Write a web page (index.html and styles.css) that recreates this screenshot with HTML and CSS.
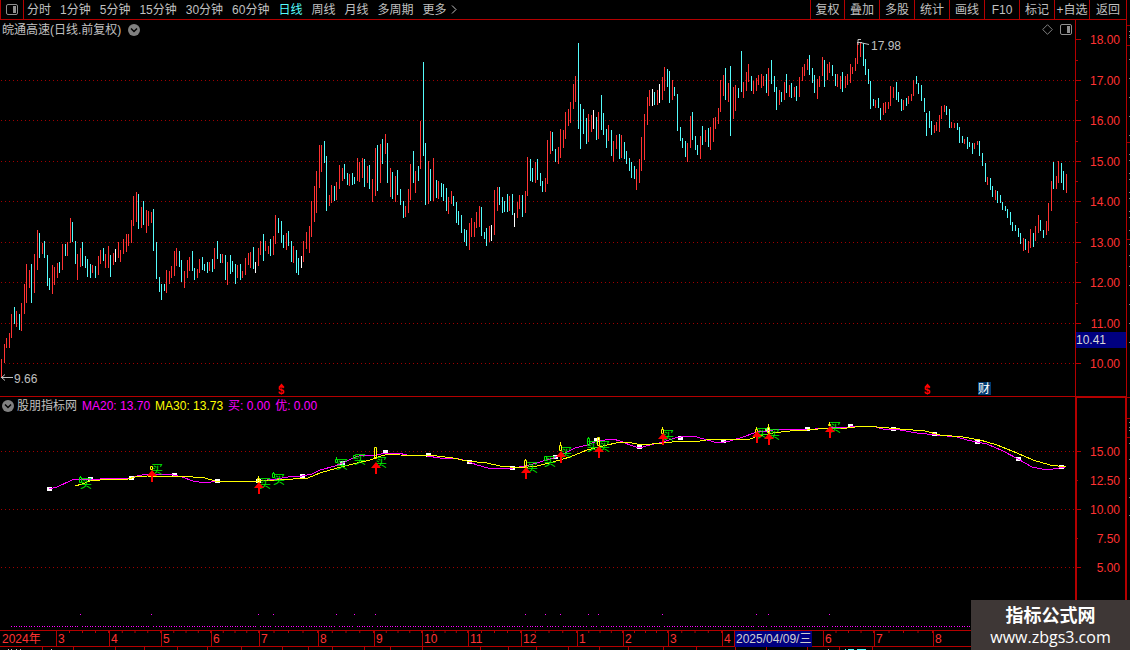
FILE: index.html
```
<!DOCTYPE html>
<html lang="zh-CN">

<head>
  <meta charset="UTF-8" />
  <meta name="viewport" content="width=device-width, initial-scale=1.0" />
  <title>皖通高速 日线</title>
  <link rel="stylesheet" href="styles.css">
</head>

<body>

  <header class="toolbar">
    <button class="layout-btn" aria-label="布局">
      <svg width="12" height="11" viewBox="0 0 12 11">
        <rect x="0.5" y="0.5" width="11" height="10" rx="1.5" fill="none" stroke="#909090" />
        <rect x="7" y="2" width="3" height="7" fill="#909090" />
      </svg>
    </button>
    <nav class="periods">
      <button>分时</button>
      <button>1分钟</button>
      <button>5分钟</button>
      <button>15分钟</button>
      <button>30分钟</button>
      <button>60分钟</button>
      <button class="active">日线</button>
      <button>周线</button>
      <button>月线</button>
      <button>多周期</button>
      <button>更多 <svg width="6" height="9" viewBox="0 0 6 9"><path d="M1 0.5L5 4.5L1 8.5" fill="none" stroke="#c0c0c0" /></svg></button>
    </nav>
    <div class="tools">
      <button>复权</button>
      <button>叠加</button>
      <button>多股</button>
      <button>统计</button>
      <button>画线</button>
      <button>F10</button>
      <button>标记</button>
      <button>+自选</button>
      <button>返回</button>
    </div>
  </header>

  <!-- K线 -->
  <section class="panel price">
    <div class="plot">
      <svg class="chart" id="kline" viewBox="0 20 1075 376" preserveAspectRatio="none">
        <path class="grid" d="M1 80.5H1075M1 120.5H1075M1 161.5H1075M1 201.5H1075M1 242.5H1075M1 282.5H1075M1 323.5H1075M1 363.5H1075" />
        <g id="bars" shape-rendering="crispEdges"></g>
        <path class="pointer" d="M858 45V39.5H861M857 42.5H862M860 42.5L869 44.5" />
        <text class="mark" x="871" y="50">17.98</text>
        <path class="pointer" d="M1 377.5H13M5 374.5L1.5 377.5L5 380.5" />
        <text class="mark" x="14" y="383">9.66</text>
        <path d="M281.5 383.5L284.5 387H278.5ZM927.5 383.5L930.5 387H924.5Z" fill="#f00" />
        <text class="dollar" x="278" y="394">$</text>
        <text class="dollar" x="924" y="394">$</text>
        <rect x="978" y="382" width="13" height="13" fill="#003a70" />
        <text class="report" x="978" y="393">财</text>
      </svg>
      <div class="title">
        <span>皖通高速(日线.前复权)</span>
        <button class="drop" aria-label="切换"><svg width="12" height="12" viewBox="0 0 12 12"><circle cx="6" cy="6" r="6" fill="#808080" /><path d="M3 4.5L6 7.5L9 4.5" fill="none" stroke="#000" stroke-width="1.5" /></svg></button>
        <div class="corner">
          <svg width="11" height="11" viewBox="0 0 11 11"><path d="M5.5 0.7L10.3 5.5L5.5 10.3L0.7 5.5Z" fill="none" stroke="#808080" /></svg>
          <svg width="12" height="11" viewBox="0 0 12 11">
            <rect x="0.5" y="0.5" width="11" height="10" rx="1.5" fill="none" stroke="#909090" />
            <rect x="7" y="2" width="3" height="7" fill="#909090" />
          </svg>
        </div>
      </div>
    </div>
    <div class="axis">
      <svg class="ticks" viewBox="1076 20 50 376" preserveAspectRatio="none">
        <path d="M1076 39.5h5M1076 80.5h5M1076 120.5h5M1076 161.5h5M1076 201.5h5M1076 242.5h5M1076 282.5h5M1076 323.5h5M1076 363.5h5M1076 60.5h2M1076 100.5h2M1076 141.5h2M1076 181.5h2M1076 222.5h2M1076 262.5h2M1076 303.5h2" />
      </svg>
      <ul>
        <li>18.00</li>
        <li>17.00</li>
        <li>16.00</li>
        <li>15.00</li>
        <li>14.00</li>
        <li>13.00</li>
        <li>12.00</li>
        <li>11.00</li>
        <li>10.00</li>
      </ul>
      <span class="cursor-price">10.41</span>
    </div>
    <svg class="side" viewBox="1126 20 4 377" preserveAspectRatio="none">
      <path d="M1126 25.5h4M1126 45.5h4M1126 142.5h4M1126 239.5h4" stroke="#b40000" />
      <path id="sideMarks" stroke="#c0c0c0" />
    </svg>
  </section>

  <!-- 指标 -->
  <section class="panel indicator">
    <div class="plot">
      <svg class="chart" viewBox="0 397 1075 233" preserveAspectRatio="none">
        <path class="grid" d="M1 451.5H1075M1 509.5H1075M1 567.5H1075" />
        <g id="dots" fill="#f0f" shape-rendering="crispEdges"></g>
        <g id="squares" fill="#fff" shape-rendering="crispEdges"></g>
        <polyline class="ma20" points="49,489 57,487 72,480 80,479 100,479 110,478 125,479 132,478 137,476 147,474 163,474 173,475 182,477 193,481 205,483 217,481 228,481 235,482 257,481 267,480 277,479 288,477 302,476 312,474 320,470 335,466 345,462 355,457 363,455 373,456 385,453 398,453 407,455 427,456 440,458 455,458 467,461 477,465 488,468 513,468 525,466 537,463 553,458 563,454 575,448 587,445 597,441 613,439 620,441 630,445 639,448 650,445 663,442 675,438 687,436 697,437 707,440 718,443 730,441 743,437 757,432 767,431 780,429 800,430 830,428 850,427 863,426 872,426 883,429 900,430 917,433 937,435 957,437 967,440 987,444 1003,451 1018,459 1032,467 1047,470 1065,467" />
        <polyline class="ma30" points="75,486 82,484 90,481 100,480 128,479 135,477 147,476 193,477 205,478 215,481 257,481 277,480 293,479 308,478 320,473 337,468 353,464 370,460 378,457 388,454 400,455 437,456 453,458 467,461 487,463 500,466 520,468 537,466 553,462 570,457 587,450 603,446 620,442 632,443 642,445 663,443 672,442 700,441 713,439 750,439 758,436 773,433 790,431 807,430 830,428 847,428 863,426 877,427 900,429 925,431 940,435 963,437 980,440 997,445 1017,453 1033,460 1050,465 1066,467" />
        <g id="signals"></g>
      </svg>
      <div class="title">
        <button class="drop" aria-label="切换指标"><svg width="12" height="12" viewBox="0 0 12 12"><circle cx="6" cy="6" r="6" fill="#808080" /><path d="M3 4.5L6 7.5L9 4.5" fill="none" stroke="#000" stroke-width="1.5" /></svg></button>
        <span>股朋指标网</span>
        <span class="magenta">MA20: 13.70</span>
        <span class="yellow">MA30: 13.73</span>
        <span class="magenta">买: 0.00</span>
        <span class="magenta">优: 0.00</span>
      </div>
    </div>
    <div class="axis">
      <svg class="ticks" viewBox="1077 398 48 232" preserveAspectRatio="none">
        <path d="M1077 451.5h4M1077 509.5h4M1077 567.5h4M1077 480.5h1M1077 538.5h1" />
      </svg>
      <ul>
        <li>15.00</li>
        <li>12.50</li>
        <li>10.00</li>
        <li>7.50</li>
        <li>5.00</li>
      </ul>
    </div>
    <svg class="side" viewBox="1126 397 4 233" preserveAspectRatio="none">
      <path d="M1126 397.5h4M1126 418.5h4M1126 437.5h4" stroke="#b40000" />
      <path d="M1129 422.5h1M1129 427.5h1M1129 430.5h1M1129 443.5h1M1129 459.5h1M1129 478.5h1M1129 497.5h1M1129 515.5h1" stroke="#c0c0c0" />
    </svg>
  </section>

  <ol class="timeline">
    <li>2024年</li>
    <li>3</li>
    <li>4</li>
    <li>5</li>
    <li>6</li>
    <li>7</li>
    <li>8</li>
    <li>9</li>
    <li>10</li>
    <li>11</li>
    <li>12</li>
    <li>1</li>
    <li>2</li>
    <li>3</li>
    <li>4</li>
    <li class="current">2025/04/09/三</li>
    <li>6</li>
    <li>7</li>
    <li>8</li>
  </ol>
  <svg class="footer-strip" viewBox="0 647 1130 3" preserveAspectRatio="none">
    <path d="M42.5 647v3M73.5 647v3M115.5 647v3M144.5 647v3M177.5 647v3M207.5 647v3M241.5 647v3M282.5 647v3M308.5 647v3M332.5 647v3M364.5 647v3M390.5 647v3M422.5 647v3M480.5 647v3M508.5 647v3M536.5 647v3M568.5 647v3M599.5 647v3M628.5 647v3M663.5 647v3M696.5 647v3M735.5 647v3M766.5 647v3M807.5 647v3M839.5 647v3M872.5 647v3" stroke="#b40000" />
    <path d="M8 649.5h1M11 649.5h1M16 649.5h1M20 649.5h1M51 649.5h1M828 649.5h1" stroke="#c0c0c0" />
    <path d="M845 649.5h1M848 649.5h6M857 649.5h9" stroke="#54fcfc" />
  </svg>

  <aside class="watermark">
    <strong>指标公式网</strong>
    <span>www.zbgs3.com</span>
  </aside>

  <script src="script.js"></script>
</body>

</html>
```

FILE: styles.css
```
* {
  box-sizing: border-box;
}

body {
  margin: 0;
  height: 100vh;
  display: flex;
  flex-direction: column;
  overflow: hidden;
  background: #000;
  color: #c0c0c0;
  font-family: "Liberation Sans", "Noto Sans CJK SC", sans-serif;
  font-size: 12px;
  line-height: 14px;
}

button {
  margin: 0;
  padding: 0;
  border: none;
  background: none;
  color: inherit;
  font: inherit;
  white-space: nowrap;
  cursor: pointer;
}

ul,
ol {
  margin: 0;
  padding: 0;
  list-style: none;
}

svg {
  display: block;
}

/* 顶部工具栏 */
.toolbar {
  display: flex;
  height: 20px;
  margin-right: 3px;
  border: solid #b40000;
  border-width: 0 1px 1px 0;
}

.layout-btn {
  display: flex;
  align-items: center;
  justify-content: center;
  width: 24px;
  border: solid #b40000;
  border-width: 0 1px;
}

.periods {
  display: flex;
  gap: 9px;
  padding-left: 3px;
}

.periods svg {
  display: inline-block;
  margin-left: 1px;
}

.periods .active {
  color: #54fcfc;
}

.tools {
  display: flex;
  margin-left: auto;
}

.tools button {
  width: 35px;
  border-left: 1px solid #b40000;
}

.tools button:first-child {
  width: 34px;
}

.tools button:last-child {
  width: 37px;
}

/* 图表区 */
.panel {
  display: grid;
  grid-template-columns: minmax(0, 1fr) 51px 4px;
  grid-template-rows: minmax(0, 1fr);
  min-height: 0;
}

.price {
  flex: 377 1 0;
}

.indicator {
  flex: 233 1 0;
}

.plot,
.axis {
  display: grid;
  grid-template-columns: minmax(0, 1fr);
  grid-template-rows: minmax(0, 1fr);
  min-height: 0;
}

.plot > *,
.axis > * {
  grid-area: 1 / 1;
}

.price .plot,
.price .axis {
  border-bottom: 1px solid #b40000;
}

.chart,
.ticks,
.side {
  width: 100%;
  height: 100%;
}

.chart {
  overflow: visible;
}

.grid {
  fill: none;
  stroke: #a00000;
  stroke-dasharray: 1 3;
}

.title {
  display: flex;
  align-self: start;
  align-items: center;
  gap: 7px;
  height: 19px;
  padding: 0 3px 0 2px;
}

.corner {
  display: flex;
  gap: 7px;
  margin-left: auto;
}

.indicator .title {
  height: 17px;
  gap: 5px;
}

.indicator .drop {
  margin-right: -2px;
}

.magenta {
  color: #f0f;
}

.yellow {
  color: #ff0;
}

.axis {
  position: relative;
  border-left: 1px solid #b40000;
  color: #ff3232;
}

.axis ul {
  display: flex;
  flex-direction: column;
  justify-content: space-between;
  padding: 13px 6px 25px;
  text-align: right;
}

.indicator .axis {
  border-width: 1px 1px 0 2px;
  border-style: solid;
  border-color: #b40000;
}

.indicator .axis ul {
  padding: 47px 5px 55px;
}

.ticks {
  stroke: #b40000;
}

.cursor-price {
  position: absolute;
  top: 83%;
  left: 0;
  right: 0;
  height: 16px;
  line-height: 16px;
  background: #000080;
  color: #d8d8d8;
}

.side {
  border-left: 1px solid #b40000;
}

.mark {
  fill: #c0c0c0;
}

.pointer {
  fill: none;
  stroke: #c0c0c0;
}

.dollar {
  fill: #f00;
  font-weight: bold;
  font-size: 11px;
}

.report {
  fill: #fff;
}

.ma20,
.ma30 {
  fill: none;
  stroke: #f0f;
  shape-rendering: crispEdges;
}

.ma30 {
  stroke: #ff0;
}

.buy {
  fill: #00f000;
}

/* 时间轴 */
.timeline {
  display: grid;
  grid-template-columns: 56fr 53fr 52fr 50fr 48fr 59fr 56fr 48fr 46fr 53fr 56fr 46fr 45fr 54fr 12fr 89fr 51fr 59fr 197fr;
  height: 17px;
  border: solid #b40000;
  border-width: 1px 0;
  color: #ff3232;
}

.timeline li {
  min-width: 0;
  padding-left: 1px;
  line-height: 16px;
  white-space: nowrap;
  border-left: 1px solid #b40000;
  background: linear-gradient(to left, #b40000 1px, transparent 1px) 0 0 / 25% 2px repeat-x;
}

.timeline li:first-child,
.timeline li:nth-child(15) {
  background: none;
}

.timeline li:first-child {
  border-left-color: transparent;
}

.timeline .current {
  margin-right: 11px;
  color: #d0d0d0;
  background: #000080;
}

.footer-strip {
  width: 100%;
  height: 3px;
}

.watermark {
  position: absolute;
  right: 0;
  bottom: 0;
  display: flex;
  flex-direction: column;
  align-items: center;
  width: 159px;
  height: 50px;
  padding-top: 2px;
  background: #3e3736;
  color: #fff;
}

.watermark strong {
  font-family: "Noto Sans CJK SC", sans-serif;
  font-size: 18px;
  line-height: 24px;
}

.watermark span {
  font-family: "Open Sans", sans-serif;
  font-size: 16px;
  line-height: 22px;
}
```

FILE: script.js
```
// r = 涨, c = 跌, w = 平; 每项: x,最高,最低
const bars = `
r1,359,377 r4,344,363 r6,338,348 r9,333,348 r11,314,338 c14,307,324 r16,311,327 c19,314,330 r21,303,331 r24,284,314
r26,264,303 r29,270,288 c31,264,303 r34,254,293 r37,230,270 c39,233,258 r42,243,254 c44,241,258 c47,255,286 c49,278,290
r52,265,294 r54,267,285 r57,263,278 c59,262,273 r62,244,270 c65,244,256 r67,242,256 r70,218,243 c72,222,242 c75,241,264
r77,254,280 r80,248,267 c82,242,266 c85,256,268 c87,259,277 c90,264,278 r92,265,273 c95,266,278 r98,256,275 r100,250,264
c103,248,261 r105,254,268 r108,246,268 c110,255,277 r113,253,265 w115,249,262 r118,242,258 r120,250,262 r123,239,254 r126,234,252
r128,234,246 r131,220,243 r133,196,226 r136,192,222 c138,194,229 r141,207,228 c143,201,225 r146,210,233 r148,211,226 r151,212,223
c153,209,251 c156,242,279 c159,277,292 c161,284,300 c164,284,291 r166,270,293 r169,271,284 r171,266,278 r174,251,276 r176,248,266
c179,251,267 c181,260,282 r184,271,288 r187,260,278 r189,257,271 c192,251,271 c194,268,280 r197,269,278 r199,259,273 c202,257,270
c204,264,271 c207,262,273 r209,262,271 c212,259,272 r214,248,269 c217,241,259 c220,254,263 r222,254,263 c225,255,280 r227,262,285
c230,255,274 c232,261,272 c235,264,284 r237,265,278 c240,264,280 r242,271,278 r245,258,275 r248,253,265 r250,252,268 c253,247,269
w255,262,273 r258,248,266 r260,241,255 c263,234,261 r265,241,251 r268,246,254 c270,239,256 r273,236,255 r275,215,244 c278,218,233
c281,221,243 c283,235,248 r286,233,250 c288,231,246 c291,241,262 r293,246,263 c296,250,273 c298,258,275 w301,256,268 r303,241,262
r306,232,249 r309,226,253 r311,201,237 r314,186,222 r316,171,213 r319,145,188 r321,145,172 c324,141,163 c326,156,211 r329,195,206
r331,185,203 c334,186,201 r336,182,200 r339,165,189 r342,168,181 c344,164,179 c347,173,185 r349,174,186 c352,173,185 c354,177,184
r357,158,181 r359,162,182 r362,158,178 c364,159,187 r367,166,183 c369,165,189 r372,179,202 r375,148,196 c377,145,191 r380,144,183
c382,139,164 r385,134,154 c387,143,183 r390,168,197 c392,172,199 r395,176,202 c397,170,195 c400,189,205 c403,201,218 r405,206,217
r408,189,213 r410,164,200 c413,151,183 r415,171,193 c418,166,181 r420,121,169 c423,62,156 c425,143,205 r428,161,204 c430,169,201
r433,158,201 c436,180,198 r438,181,199 c441,183,197 c443,184,201 c446,188,211 r448,197,214 r451,191,204 c453,196,206 c456,202,223
c458,211,225 c461,215,233 c464,229,242 c466,230,246 r469,223,250 r471,218,237 r474,222,237 r476,212,228 r479,206,227 c481,207,236
c484,232,239 c486,228,246 r489,226,242 w491,225,241 r494,190,235 r497,187,211 c499,187,205 c502,197,213 c504,201,212 c507,194,212
r509,196,211 c512,194,215 w514,213,227 r517,202,218 r519,195,209 c522,195,217 r525,191,213 r527,157,196 c530,159,181 c532,168,182
r535,162,183 c537,159,180 c540,173,186 c542,181,192 r545,178,192 r547,140,184 r550,131,154 c552,132,151 c555,149,162 r558,147,164
r560,129,158 r563,130,148 r565,112,139 r568,109,126 r570,102,123 r573,84,109 r575,76,102 c578,43,129 c580,104,149 c583,109,134
c586,118,144 r588,114,142 r591,115,132 w593,110,129 c596,117,140 r598,112,139 c601,95,130 c603,113,135 c606,129,148 r608,125,141
c611,130,156 r613,141,162 r616,135,149 c619,134,159 r621,135,158 c624,142,159 c626,151,164 c629,158,171 c631,162,178 c634,166,179
r636,169,190 r639,159,183 r641,137,171 r644,114,160 r647,97,125 r649,90,106 w652,89,106 c654,92,105 r657,90,105 w659,84,103
r662,77,100 r664,67,91 c667,69,87 c669,71,103 r672,80,100 c674,87,96 c677,94,131 c680,127,141 c682,138,148 c685,141,157
r687,143,162 r690,116,148 c692,112,140 c695,136,150 c697,145,155 r700,136,159 c702,126,145 r705,130,142 c708,128,147 r710,127,150
r713,118,142 r715,117,129 r718,108,124 r720,80,112 r723,75,96 c725,68,100 r728,83,102 c730,66,136 r733,87,119 r735,85,111
c738,88,98 c741,51,92 r743,82,98 r746,72,91 r748,64,82 c751,76,91 r753,81,94 r756,78,91 r758,75,85 r761,74,88
r763,76,86 c766,74,93 r768,68,96 c771,60,84 c774,76,92 c776,87,110 r779,90,105 c781,92,102 r784,82,100 c786,74,93
r789,85,97 c791,83,98 r794,87,97 c796,86,101 r799,77,97 r802,67,81 r804,64,76 r807,59,70 c809,55,75 c812,68,83
c814,75,93 r817,79,99 r819,76,87 r822,57,76 c824,60,87 r827,64,80 r829,62,73 c832,65,76 c835,74,86 r837,74,87
r840,76,89 c842,72,92 r845,76,88 r847,74,85 r850,64,83 r852,67,74 r855,58,71 r857,42,64 r860,42,57 c863,43,66
c865,59,75 c868,69,84 c870,81,109 c873,99,106 r875,100,108 c878,98,108 c880,108,120 r883,103,115 r885,102,113 r888,102,109
r890,86,106 r893,87,98 c896,82,100 c898,92,102 c901,99,111 r903,100,110 c906,98,106 r908,96,104 r911,94,101 r913,80,96
c916,76,84 c918,83,94 c921,85,101 c924,98,112 c926,113,136 c929,111,128 c931,121,135 r934,125,133 r936,122,131 r939,115,132
r941,106,119 r944,105,112 c946,106,115 c949,109,128 r951,122,128 r954,123,128 c957,123,130 c959,127,143 c962,136,143 r964,139,144
c967,137,149 c969,142,147 c972,143,154 r974,143,149 r977,141,145 c979,141,156 c982,153,166 c985,163,182 r987,177,185 c990,178,190
c992,186,197 r995,190,200 c997,191,203 c1000,195,203 c1002,202,210 c1005,206,211 c1007,209,218 c1010,212,225 c1012,222,231 c1015,225,231
c1018,228,237 c1020,233,244 r1023,238,251 c1025,239,250 r1028,241,253 r1030,229,248 c1033,233,247 r1035,226,241 r1038,215,233 c1040,220,231
c1043,230,238 r1046,221,235 r1048,203,231 r1051,181,211 c1053,162,189 r1056,176,189 r1058,161,183 c1061,163,183 c1063,171,190 r1066,174,193
`.trim().split(/\s+/).map((s) => [s[0], ...s.slice(1).split(",").map(Number)]);

const colors = { r: "#ff3232", c: "#54fcfc", w: "#ffffff" };

// 买点 x
const signalX = [80, 151, 258, 273, 336, 354, 375, 525, 545, 560, 588, 598, 662, 756, 768, 829];

const squares = [
  [49, 489], [90, 479], [131, 478], [174, 475], [217, 481], [258, 481], [302, 476], [342, 463], [385, 452],
  [428, 455], [469, 462], [512, 468], [555, 457], [596, 440], [639, 447], [680, 438], [723, 441], [767, 430],
  [807, 429], [850, 426], [893, 429], [934, 434], [977, 442], [1018, 459], [1061, 467]
];

// "买" 字左下角
const buys = [
  [80, 488], [151, 474], [259, 488], [273, 484], [336, 469], [354, 464], [375, 467], [526, 472],
  [544, 466], [560, 457], [587, 451], [598, 451], [662, 440], [756, 438], [768, 439], [829, 432]
];

// 红箭头顶点
const arrows = [
  [152, 471], [259, 483], [376, 463], [526, 468], [561, 452], [599, 447], [663, 434], [757, 432], [769, 434], [830, 427]
];

// 小K线: 颜色, x, 影线顶, 实体顶, 实体底
const candles = [
  ["#00f000", 80, 476, 477, 482], ["#ff0", 151, 466, 466, 469], ["#ff0", 258, 476, 478, 482],
  ["#00f000", 273, 472, 473, 477], ["#00f000", 336, 457, 459, 462], ["#00f000", 354, 455, 455, 458],
  ["#ff0", 375, 447, 447, 458], ["#ff0", 525, 459, 460, 466], ["#00f000", 545, 456, 456, 460],
  ["#ff0", 560, 442, 445, 450], ["#00f000", 588, 437, 438, 445], ["#ff0", 598, 437, 437, 445],
  ["#ff0", 662, 427, 429, 433], ["#ff0", 756, 427, 429, 432], ["#ff0", 768, 424, 427, 432], ["#ff0", 829, 422, 424, 425]
];

function rect(x, y, w, h, fill) {
  return `<rect x="${x}" y="${y}" width="${w}" height="${h}"${fill ? ` fill="${fill}"` : ""} />`;
}

document.getElementById("bars").innerHTML = bars
  .map(([type, x, high, low]) => rect(x, high, 1, low - high, colors[type]))
  .join("");

document.getElementById("dots").innerHTML = bars
  .filter(([, x]) => x >= 11)
  .map(([, x]) => rect(x, signalX.some((s) => Math.abs(s - x) < 2) ? 614 : 626, 1, 1))
  .join("");

document.getElementById("squares").innerHTML = squares
  .map(([x, y]) => rect(x - 2, y - 2, 5, 4))
  .join("");

document.getElementById("signals").innerHTML =
  buys.map(([x, y]) => `<text class="buy" x="${x}" y="${y}">买</text>`).join("") +
  candles.map(([color, x, wick, top, bottom]) =>
    `<path d="M${x + 0.5} ${wick}V${top}M${x - 0.5} ${top + 0.5}h2V${bottom + 0.5}h-2Z" fill="none" stroke="${color}" />`
  ).join("") +
  arrows.map(([x, y]) => `<path d="M${x} ${y - 1}l5 6h-4v6h-2v-6h-4Z" fill="#f00" />`).join("");

document.getElementById("sideMarks").setAttribute("d",
  [31, 35, 37, 59, 78, 97, 116, 135, 154, 160, 173, 179, 192, 198, 211, 217, 230, 244, 255, 266, 285, 304, 323, 342]
    .map((y) => `M1129 ${y}.5h1`).join(""));
```
